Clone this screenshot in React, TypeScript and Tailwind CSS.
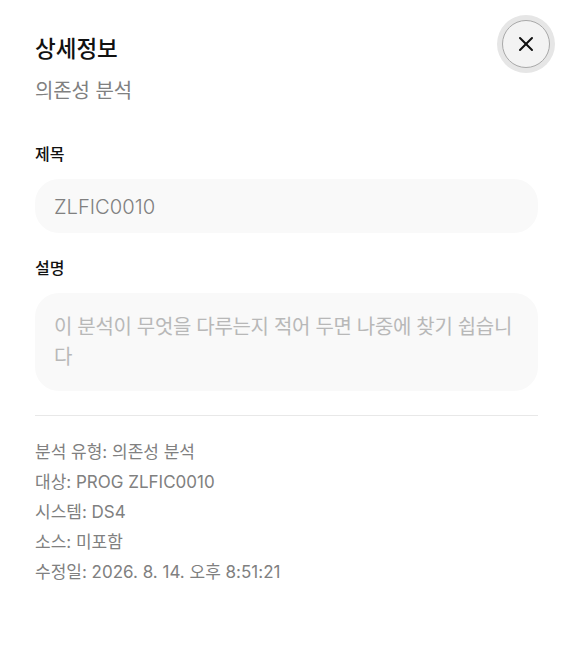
import { X } from "lucide-react";

const font = "font-['Inter','Noto_Sans_CJK_KR',sans-serif]";

const metaRows = [
  "분석 유형: 의존성 분석",
  "대상: PROG ZLFIC0010",
  "시스템: DS4",
  "소스: 미포함",
  "수정일: 2026. 8. 14. 오후 8:51:21",
];

export default function App() {
  return (
    <div className={`relative h-[648px] w-[573px] overflow-hidden bg-white ${font}`}>
      <button className="absolute right-[23px] top-[20px] flex h-[48px] w-[48px] items-center justify-center rounded-full border border-[#a8a8a8] bg-[#f3f3f3] text-[#111] shadow-[0_0_0_5px_#e6e6e6]">
        <X size={24} strokeWidth={2} />
      </button>
      <div className="px-[35px] pt-[34px]">
        <h2 className="text-[22.5px] font-medium leading-[30px] text-[#111]">상세정보</h2>
        <p className="mt-[13px] text-[20px] leading-[28px] tracking-[-0.1px] text-[#808080]">의존성 분석</p>
        <label className="mt-[38px] block text-[16px] font-medium leading-[22px] text-[#111]">제목</label>
        <div className="mt-[14px] flex h-[54px] items-center rounded-[24px] bg-[#f9f9f9] px-[19px] pt-[3px] text-[20.2px] font-light text-[#808080]">
          ZLFIC0010
        </div>
        <label className="mt-[24px] block text-[16px] font-medium leading-[22px] text-[#111]">설명</label>
        <div className="mt-[14px] h-[98px] rounded-[24px] bg-[#f9f9f9] px-[19px] pt-[19px] text-[20px] leading-[30px] tracking-[-0.33px] break-all text-[#b8b8b8]">
          이 분석이 무엇을 다루는지 적어 두면 나중에 찾기 쉽습니다
        </div>
        <div className="mt-[24px] border-t border-[#e8e8e8] pt-[21px]">
          {metaRows.map((row) => (
            <p key={row} className="text-[17px] leading-[30px] text-[#808080]">{row}</p>
          ))}
        </div>
      </div>
    </div>
  );
}
